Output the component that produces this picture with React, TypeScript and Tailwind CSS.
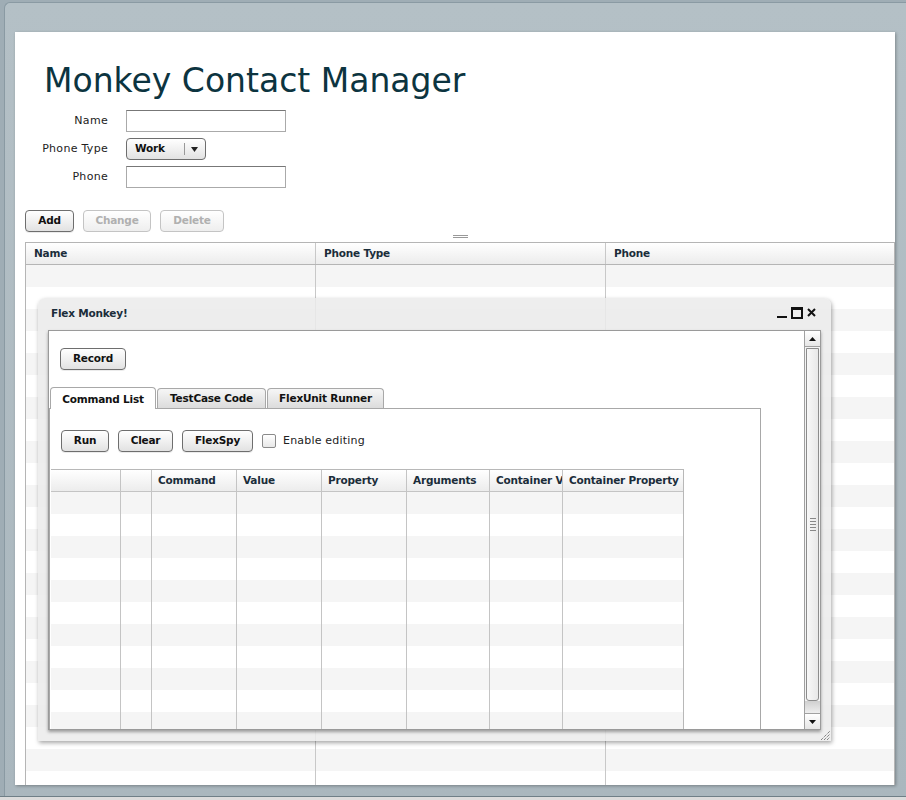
import React from "react";

const font = { fontFamily: '"DejaVu Sans", Verdana, sans-serif' };

type BtnProps = { label: string; w: string; disabled?: boolean };

const Btn: React.FC<BtnProps> = ({ label, w, disabled }) => (
  <button
    className={
      disabled
        ? `${w} h-[22px] rounded-[4px] border border-[#c4c4c4] bg-gradient-to-b from-white to-[#eeeeee] text-[10.5px] font-bold tracking-[-0.2px] text-[#b0b0b0]`
        : `${w} h-[22px] rounded-[4px] border border-[#6e6e6e] bg-gradient-to-b from-white to-[#e2e2e2] text-[10.5px] font-bold tracking-[-0.2px] text-[#111] shadow-[0_1px_0_rgba(0,0,0,0.08)]`
    }
  >
    {label}
  </button>
);

const mainCols = [
  { title: "Name", w: "w-[290px]" },
  { title: "Phone Type", w: "w-[290px]" },
  { title: "Phone", w: "w-[288px]" },
];

const innerCols = [
  { title: "", w: "w-[70px]" },
  { title: "", w: "w-[31px]" },
  { title: "Command", w: "w-[85px]" },
  { title: "Value", w: "w-[85px]" },
  { title: "Property", w: "w-[85px]" },
  { title: "Arguments", w: "w-[83px]" },
  { title: "Container Value", w: "w-[73px]" },
  { title: "Container Property", w: "w-[120px]" },
];

const MainGrid: React.FC = () => (
  <div className="ml-[10px] mt-[10px] min-h-0 w-[870px] flex-1 overflow-hidden border-x border-t border-[#b5b5b5]">
    <div className="flex h-[22px] border-b border-[#b5b5b5] bg-gradient-to-b from-white to-[#ececec]">
      {mainCols.map((c, i) => (
        <div
          key={c.title}
          className={`${c.w} flex shrink-0 items-center px-[8px] text-[10.5px] font-bold tracking-[-0.2px] text-[#1b2d3a] ${i < 2 ? "border-r border-[#c8c8c8]" : ""}`}
        >
          {c.title}
        </div>
      ))}
    </div>
    {Array.from({ length: 24 }).map((_, r) => (
      <div key={r} className={`flex h-[22px] ${r % 2 === 0 ? "bg-[#f5f5f5]" : "bg-white"}`}>
        {mainCols.map((c, i) => (
          <div key={c.title} className={`${c.w} shrink-0 ${i < 2 ? "border-r border-[#c8c8c8]" : ""}`} />
        ))}
      </div>
    ))}
  </div>
);

const InnerGrid: React.FC = () => (
  <div className="ml-[1px] mt-[17px] min-h-0 w-[633px] flex-1 overflow-hidden border-r border-t border-[#b8b8b8]">
    <div className="flex h-[22px] border-b border-[#c4c4c4] bg-gradient-to-b from-white to-[#ececec]">
      {innerCols.map((c, i) => (
        <div
          key={i}
          className={`${c.w} flex shrink-0 items-center overflow-hidden whitespace-nowrap px-[6px] text-[10.5px] font-bold tracking-[-0.2px] text-[#1b2d3a] ${i < 7 ? "border-r border-[#c4c4c4]" : ""}`}
        >
          {c.title}
        </div>
      ))}
    </div>
    {Array.from({ length: 11 }).map((_, r) => (
      <div key={r} className={`flex h-[22px] ${r % 2 === 0 ? "bg-[#f5f5f5]" : "bg-white"}`}>
        {innerCols.map((c, i) => (
          <div key={i} className={`${c.w} shrink-0 ${i < 7 ? "border-r border-[#c4c4c4]" : ""}`} />
        ))}
      </div>
    ))}
  </div>
);

const Scrollbar: React.FC = () => (
  <div className="flex w-[16px] flex-col border-l border-[#a0a0a0] bg-[#f4f4f4]">
    <div className="flex h-[16px] items-center justify-center border-b border-[#a0a0a0] bg-gradient-to-b from-white to-[#e6e6e6]">
      <svg width="7" height="4" viewBox="0 0 7 4">
        <path d="M0 4 L3.5 0 L7 4 Z" fill="#111" />
      </svg>
    </div>
    <div className="relative flex-1">
      <div className="absolute bottom-[12px] left-[1px] right-[1px] top-[1px] flex items-center justify-center rounded-b-[3px] border border-[#8c8c8c] bg-gradient-to-r from-[#f8f8f8] to-[#e8e8e8]">
        <div className="flex flex-col gap-[2px]">
          {Array.from({ length: 5 }).map((_, i) => (
            <div key={i} className="h-px w-[6px] bg-[#888]" />
          ))}
        </div>
      </div>
      <div className="absolute bottom-0 left-0 right-0 h-[12px] bg-gradient-to-b from-[#d0d0d0] to-[#eeeeee]" />
    </div>
    <div className="flex h-[16px] items-center justify-center border-t border-[#a0a0a0] bg-gradient-to-b from-white to-[#e6e6e6]">
      <svg width="7" height="4" viewBox="0 0 7 4">
        <path d="M0 0 L7 0 L3.5 4 Z" fill="#111" />
      </svg>
    </div>
  </div>
);

const Tab: React.FC<{ label: string; w: string; active?: boolean }> = ({ label, w, active }) =>
  active ? (
    <div className={`${w} relative z-10 -mb-px flex h-[22px] items-center justify-center rounded-t-[4px] border border-b-0 border-[#a8a8a8] bg-white pt-[3px] text-[10.5px] font-bold tracking-[-0.2px] text-[#111]`}>
      {label}
    </div>
  ) : (
    <div className={`${w} flex h-[20px] items-center justify-center rounded-t-[4px] border border-b-0 border-[#a8a8a8] bg-gradient-to-b from-[#f6f6f6] to-[#dcdcdc] text-[10.5px] font-bold tracking-[-0.2px] text-[#111]`}>
      {label}
    </div>
  );

const FlexMonkey: React.FC = () => (
  <div className="absolute left-[23px] top-[266px] flex h-[443px] w-[793px] flex-col rounded-t-[7px] bg-[#ebebeb]/85 shadow-[1px_2px_4px_rgba(0,0,0,0.35)]">
    <div className="flex h-[32px] items-center justify-between pl-[13px] pr-[15px]">
      <span className="text-[10.5px] font-bold tracking-[-0.2px] text-[#1b2d3a]">Flex Monkey!</span>
      <div className="flex items-end gap-[4px] pb-[2px]">
        <div className="mb-[1px] h-[2px] w-[10px] bg-[#111]" />
        <div className="h-[12px] w-[12px] border-2 border-t-[3px] border-[#111]" />
        <svg width="9" height="9" viewBox="0 0 9 9" className="mb-[2px]">
          <path d="M1 1 L8 8 M8 1 L1 8" stroke="#111" strokeWidth="2" />
        </svg>
      </div>
    </div>
    <div className="ml-[10px] flex h-[400px] w-[773px] border border-[#9a9a9a] bg-white shadow-[0_2px_3px_rgba(0,0,0,0.35)]">
      <div className="flex min-h-0 flex-1 flex-col">
        <div className="ml-[11px] mt-[17px] flex">
          <Btn label="Record" w="w-[66px]" />
        </div>
        <div className="mt-[17px] flex items-end gap-px pl-px">
          <Tab label="Command List" w="w-[106px]" active />
          <Tab label="TestCase Code" w="w-[109px]" />
          <Tab label="FlexUnit Runner" w="w-[117px]" />
        </div>
        <div className="flex min-h-0 w-[712px] flex-1 flex-col border-l border-r border-t border-[#a8a8a8]">
          <div className="ml-[11px] mt-[21px] flex items-center gap-[9px]">
            <Btn label="Run" w="w-[48px]" />
            <Btn label="Clear" w="w-[55px]" />
            <Btn label="FlexSpy" w="w-[71px]" />
            <div className="flex items-center gap-[7px]">
              <div className="h-[14px] w-[14px] rounded-[2px] border border-[#8a8a8a] bg-gradient-to-b from-white to-[#e8e8e8]" />
              <span className="text-[11px] tracking-[0.2px] text-[#222]">Enable editing</span>
            </div>
          </div>
          <InnerGrid />
        </div>
      </div>
      <Scrollbar />
    </div>
    <div className="flex flex-1 items-end justify-end">
      <svg width="11" height="11" viewBox="0 0 11 11">
        <path d="M1 10 L10 1 M4 10 L10 4 M7 10 L10 7" stroke="#555" strokeWidth="1" strokeDasharray="1 1" />
      </svg>
    </div>
  </div>
);

const Field: React.FC<{ label: string; children: React.ReactNode }> = ({ label, children }) => (
  <div className="flex items-center">
    <div className="w-[93px] text-right text-[11px] tracking-[0.3px] text-[#222]">{label}</div>
    <div className="ml-[18px] flex">{children}</div>
  </div>
);

export default function App() {
  return (
    <div style={font} className="relative h-[800px] w-[906px] overflow-hidden bg-[#9fadb5]">
      <div className="absolute inset-x-0 bottom-0 h-[4px] border-t border-[#6f7f87] bg-[#dcdcdc]" />
      <div className="ml-[4px] mt-[2px] h-[795px] w-[902px] rounded-tl-[6px] border-l border-t border-[#8a9aa3] bg-gradient-to-b from-[#b4c0c6] to-[#aab7be] pl-[10px] pt-[29px]">
        <div className="relative flex h-[753px] w-[880px] flex-col bg-white shadow-[1px_1px_3px_rgba(0,0,0,0.3)]">
          <h1 className="ml-[29px] mt-[29px] text-[33px] leading-[40px] text-[#0c3440]">
            Monkey Contact Manager
          </h1>
          <div className="mt-[9px] flex flex-col gap-[6px]">
            <Field label="Name">
              <div className="h-[22px] w-[160px] border border-[#aaa] border-t-[#777] bg-white" />
            </Field>
            <Field label="Phone Type">
              <div className="flex h-[22px] w-[80px] items-center rounded-[4px] border border-[#6e6e6e] bg-gradient-to-b from-white to-[#e2e2e2]">
                <span className="w-[57px] pl-[8px] text-[10.5px] font-bold tracking-[-0.2px] text-[#111]">Work</span>
                <div className="h-[12px] w-px bg-[#999]" />
                <svg width="7" height="5" viewBox="0 0 7 5" className="ml-[6px]">
                  <path d="M0 0 L7 0 L3.5 5 Z" fill="#222" />
                </svg>
              </div>
            </Field>
            <Field label="Phone">
              <div className="h-[22px] w-[160px] border border-[#aaa] border-t-[#777] bg-white" />
            </Field>
          </div>
          <div className="ml-[10px] mt-[22px] flex gap-[9px]">
            <Btn label="Add" w="w-[49px]" />
            <Btn label="Change" w="w-[68px]" disabled />
            <Btn label="Delete" w="w-[64px]" disabled />
          </div>
          <div className="-mb-[6px] mt-[3px] flex flex-col items-center gap-[1px] pl-[10px]">
            <div className="h-px w-[15px] bg-[#999]" />
            <div className="h-px w-[15px] bg-[#999]" />
          </div>
          <MainGrid />
          <FlexMonkey />
        </div>
      </div>
    </div>
  );
}
